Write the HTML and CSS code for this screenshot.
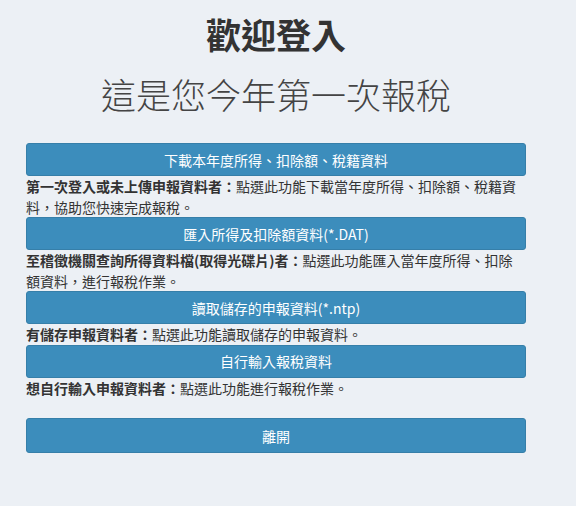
FILE: index.html
```html
<!DOCTYPE html>
<html lang="zh-Hant">
<head>
<meta charset="utf-8">
<title>歡迎登入</title>
<link rel="stylesheet" href="styles.css">
</head>
<body>
<main class="wrap">
  <h1 class="title">歡迎登入</h1>
  <p class="subtitle">這是您今年第一次報稅</p>
  <div class="actions">
    <button class="btn">下載本年度所得、扣除額、稅籍資料</button>
    <p class="desc"><b>第一次登入或未上傳申報資料者：</b>點選此功能下載當年度所得、扣除額、稅籍資料，協助您快速完成報稅。</p>
    <button class="btn">匯入所得及扣除額資料(*.DAT)</button>
    <p class="desc"><b>至稽徵機關查詢所得資料檔(取得光碟片)者：</b>點選此功能匯入當年度所得、扣除額資料，進行報稅作業。</p>
    <button class="btn">讀取儲存的申報資料(*.ntp)</button>
    <p class="desc"><b>有儲存申報資料者：</b>點選此功能讀取儲存的申報資料。</p>
    <button class="btn">自行輸入報稅資料</button>
    <p class="desc"><b>想自行輸入申報資料者：</b>點選此功能進行報稅作業。</p>
    <button class="btn btn-leave">離開</button>
  </div>
</main>
</body>
</html>
```
FILE: styles.css
```css
html, body {
  margin: 0;
  padding: 0;
  background: #ecf0f5;
}
body {
  font-family: "Noto Sans CJK TC", "Noto Sans CJK SC", sans-serif;
  color: #333;
}
.wrap {
  width: 500px;
  margin-left: 26px;
  padding-top: 14px;
}
.title {
  margin: 0;
  font-size: 35px;
  line-height: 40px;
  font-weight: 700;
  text-align: center;
  color: #333;
}
.subtitle {
  margin: 18px 0 0;
  font-size: 35px;
  line-height: 44px;
  font-weight: 300;
  text-align: center;
  color: #444;
}
.actions {
  margin-top: 27px;
  display: flex;
  flex-direction: column;
}
.btn {
  display: block;
  width: 100%;
  height: 33px;
  margin: 0;
  padding: 0;
  border: 1px solid #367fa9;
  border-radius: 3px;
  background: #3c8dbc;
  color: #fff;
  font-family: inherit;
  font-size: 14px;
  line-height: 20px;
}
.desc {
  margin: 0;
  padding-right: 6px;
  font-size: 14px;
  line-height: 20.5px;
  color: #333;
}
.desc b {
  font-weight: 700;
}
.btn-leave {
  margin-top: 20px;
  height: 35px;
}
```
